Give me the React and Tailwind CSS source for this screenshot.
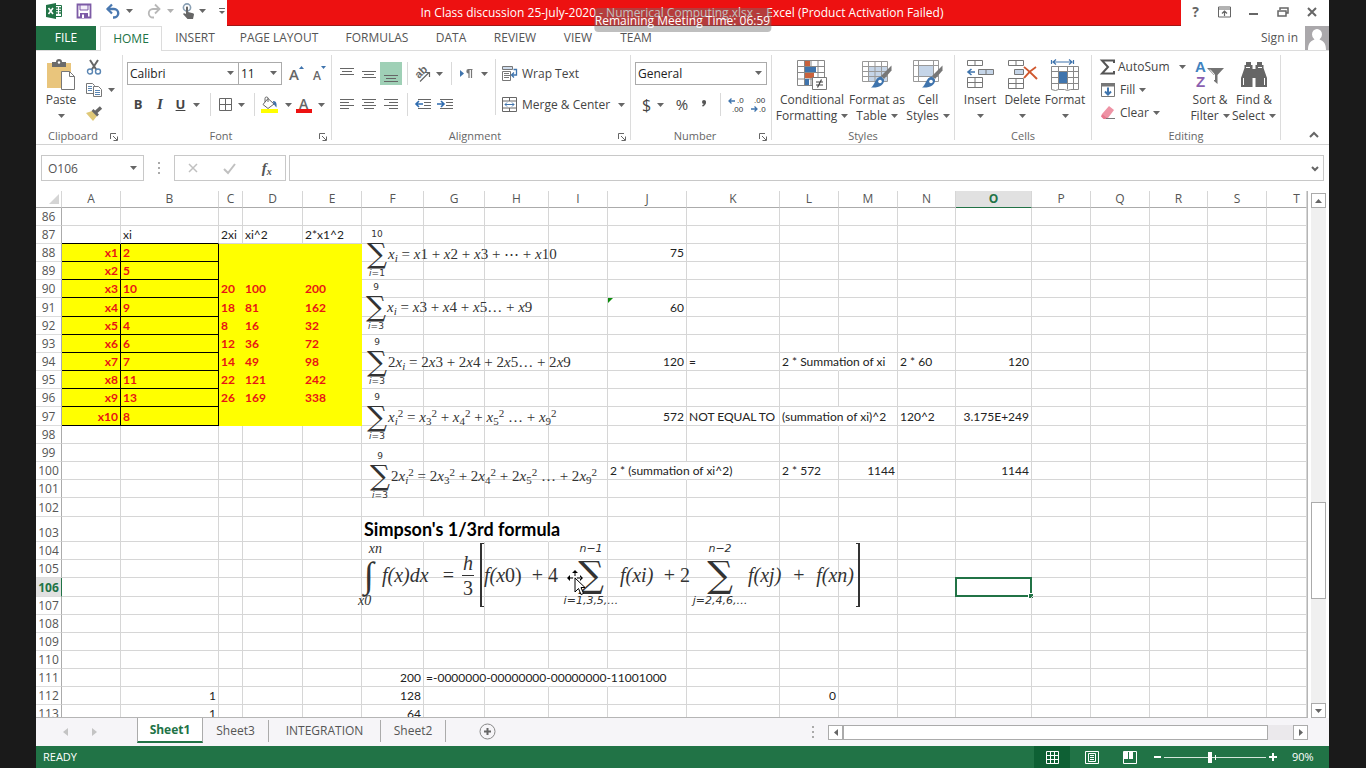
import React from "react";

const Down = ({ className = "" }) => (
  <svg viewBox="0 0 7 4" className={"h-1 w-[7px] shrink-0 fill-[#666] " + className} aria-hidden="true">
    <path d="M0 0h7L3.5 4z" />
  </svg>
);

const Svg = ({ w = 16, h = 16, children }) => (
  <svg width={w} height={h} viewBox={`0 0 ${w} ${h}`} fill="none" className="shrink-0 overflow-visible" aria-hidden="true">
    {children}
  </svg>
);

/* ---------- quick access ---------- */
const ExcelIcon = () => (
  <Svg>
    <path d="M9 2.5h6.5v11H9" fill="#fff" stroke="#217346" />
    <path d="M10 5h2M13 5h2M10 7.5h2M13 7.5h2M10 10h2M13 10h2" stroke="#217346" strokeWidth="1.3" />
    <path d="M0 2l10-2v16L0 14z" fill="#217346" />
    <path d="M2.5 5l4.5 6M7 5l-4.5 6" stroke="#fff" strokeWidth="1.6" />
  </Svg>
);
const SaveIcon = () => (
  <Svg>
    <path d="M1.5 1.5h13v13h-13z" stroke="#7d5ba6" strokeWidth="1.8" />
    <path d="M4 2h8v5H4z" fill="#f4effa" stroke="#7d5ba6" />
    <path d="M4 10h8v5H4z" fill="#7d5ba6" />
    <path d="M6 11.5h2V15H6z" fill="#fff" />
  </Svg>
);
const Undo = ({ color }) => (
  <Svg w={14}>
    <path d="M1.500 6H8a4 4 0 0 1 0 8.500H7" stroke={color} strokeWidth="2.400" />
    <path d="M6 1.500L1.500 6 6 10.500" stroke={color} strokeWidth="2.200" />
  </Svg>
);
const Redo = ({ color }) => (
  <Svg w={14}>
    <path d="M12.500 6H6a4 4 0 0 0 0 8.500h1" stroke={color} strokeWidth="1.800" />
    <path d="M8 1.500L12.500 6 8 10.500" stroke={color} strokeWidth="1.800" />
  </Svg>
);
const Touch = () => (
  <Svg w={13}>
    <circle cx="5" cy="4.500" r="3.600" stroke="#8aa0b4" strokeWidth="1.600" />
    <path d="M4 4.500c0-1.300 2-1.300 2 0V9l5 1.200c.7.200 1 .6 1 1.300L11 16H5.500L1 11c.5-1 1.500-1 3 0z" fill="#666" />
  </Svg>
);

/* ---------- ribbon icons ---------- */
const PasteIcon = () => (
  <Svg w={30} h={32}>
    <path d="M1 4h24v25H1z" fill="#e9c57c" />
    <path d="M6 3h4a3 3 0 0 1 6 0h4v5H6z" fill="#6b6b6b" />
    <circle cx="13" cy="3.5" r="1.2" fill="#fff" />
    <path d="M15.500 12.500h8l5 5v13h-13z" fill="#fff" stroke="#777" />
    <path d="M23.500 12.500v5h5" stroke="#777" />
  </Svg>
);
const CutIcon = () => (
  <Svg>
    <path d="M4 1l6.500 10M12 1L5.500 11" stroke="#666" strokeWidth="2" />
    <circle cx="4" cy="12.500" r="2.500" stroke="#5b86b3" strokeWidth="1.400" />
    <circle cx="12" cy="12.500" r="2.500" stroke="#5b86b3" strokeWidth="1.400" />
  </Svg>
);
const CopyIcon = () => (
  <Svg>
    <path d="M.5 1.500h6l2 2v8h-8z" fill="#fff" stroke="#777" />
    <path d="M2 4.500h4M2 6.500h4M2 8.500h4" stroke="#5b86b3" />
    <path d="M7.500 4.500h5l3 3v7h-8z" fill="#fff" stroke="#777" />
    <path d="M9 8.500h5M9 10.500h5M9 12.500h5" stroke="#5b86b3" />
  </Svg>
);
const BrushIcon = () => (
  <Svg>
    <path d="M0 8l6-2 5 5-4 5z" fill="#dfc878" />
    <path d="M6.500 5l5.500 5.500" stroke="#666" strokeWidth="2.600" />
    <path d="M9.500 7.500L15 2.500" stroke="#666" strokeWidth="3.400" />
  </Svg>
);
const Lines = ({ rows }) => (
  <Svg w={14} h={16}>
    {rows.map(([y, a, b]) => (
      <path key={y} d={`M${a} ${y}.5H${b}`} stroke="#666" />
    ))}
  </Svg>
);
const BordersIcon = () => (
  <Svg w={13} h={13}>
    <path d="M.5.5h12v12H.5zM6.500.5v12M.5 6.500h12" stroke="#666" />
  </Svg>
);
const BucketIcon = () => (
  <Svg w={18} h={16}>
    <path d="M7 1.500l6 5.500-6 4.500-5-4z" fill="#fff" stroke="#666" />
    <path d="M7 5V1.500a1.500 1.500 0 0 0-3 0V5" stroke="#666" />
    <path d="M12 4c3 0 4 2 3.500 6.500C14 9 13.500 8 12.500 7z" fill="#4472a8" />
    <path d="M0 12h17v4H0z" fill="#ff0" />
  </Svg>
);
const OrientIcon = () => (
  <Svg w={17} h={16}>
    <text x="0" y="0" transform="translate(6 13) rotate(-45)" fontSize="11" fontWeight="700" fill="#666" fontFamily="Liberation Sans">ab</text>
    <path d="M7 15.500L16 6.500M12 6.500h4.500V11" stroke="#666" strokeWidth="1.200" />
  </Svg>
);
const ParaIcon = () => (
  <Svg w={13} h={14}>
    <path d="M0 3l4 3.500L0 10z" fill="#3f74ad" />
    <path d="M8.500 2a2.200 2.200 0 0 0 0 4.400h.5V2z" fill="#777" />
    <path d="M12.500 2.500H8.500M9 3v8M11.500 3v8" stroke="#777" strokeWidth="1.200" />
  </Svg>
);
const Indent = ({ right }) => (
  <Svg>
    <path d="M3 2.500h13M9 5.500h7M9 8.500h7M3 11.500h13" stroke="#666" />
    <path d={right ? "M0 7h7M4 4l3 3-3 3" : "M1 7h7M4 4L1 7l3 3"} stroke="#2f6cb0" strokeWidth="1.600" />
  </Svg>
);
const WrapIcon = () => (
  <Svg>
    <path d="M.5.500h10v3H.5z" fill="#cfdcec" stroke="#777" />
    <path d="M.5 5.500h8v9H.5zM2 7.500h5M2 9.500h7M2 11.500h5" stroke="#777" />
    <path d="M11.500 3.500h3V9H10M12 6.500L9.500 9l2.500 2.500" stroke="#3f74ad" strokeWidth="1.300" />
  </Svg>
);
const MergeIcon = () => (
  <Svg>
    <path d="M.5.500h14v14H.5zM.500 4h14M.5 11h14M7.500.5V4M7.500 11v3.500" stroke="#666" />
    <path d="M3 7.500h9M5 5.500l-2 2 2 2M10 5.500l2 2-2 2" stroke="#3f74ad" />
  </Svg>
);
const Decimals = ({ less }) => (
  <Svg w={16} h={16}>
    <g fontFamily="Liberation Sans" fontSize="8" fill="#333">
      <text x={less ? 4 : 9} y="6">{less ? ".00" : ".0"}</text>
      <text x={less ? 9 : 4} y="15">{less ? ".0" : ".00"}</text>
    </g>
    <path d={less ? "M1 12h6M4.500 9.500L7 12l-2.500 2.500" : "M1 4h6M3.500 1.500L1 4l2.500 2.500"} stroke="#3f74ad" strokeWidth="1.300" />
  </Svg>
);
const CondIcon = () => (
  <Svg w={32} h={32}>
    <path d="M1.500 1.500h27v25h-27zM1.500 7.500h27M1.500 13.500h27M1.500 20h27M8.500 1.500v25M15 1.500v25M22 1.500v25" stroke="#888" />
    <path d="M9 2h5v5H9zM9 14h9v5H9z" fill="#c9623c" />
    <path d="M9 8h11v5H9zM9 20h4v6H9z" fill="#3f74ad" />
    <path d="M16.500 18.500h14v12h-14z" fill="#fff" stroke="#777" />
    <path d="M20 23h7M20 26h7M25.500 20.500l-4 8" stroke="#444" strokeWidth="1.200" />
  </Svg>
);
const Brush = () => (
  <>
    <path d="M30.500 6.500v5L23 20l-3-3z" fill="#777" />
    <path d="M20 17.500l3 3c.5 5-4 8.500-13 8 4-2 3.500-10 10-11z" fill="#3f74ad" />
    <circle cx="19" cy="22.500" r="1.800" fill="#fff" />
  </>
);
const FormatTableIcon = () => (
  <Svg w={32} h={32}>
    <path d="M8 8h18v14H8z" fill="#c5d5e8" />
    <path d="M1.500 2.500h25v20h-25zM1.500 7.500h25M1.500 12.500h25M1.500 17.500h25M7.500 2.500v20M14 2.500v20M20.500 2.500v20" stroke="#999" />
    <Brush />
  </Svg>
);
const CellStylesIcon = () => (
  <Svg w={32} h={32}>
    <path d="M7 7h14v10H7z" fill="#c5d5e8" />
    <path d="M1.500 1.500h25v21h-25zM1.500 6.500h25M1.500 17.500h25M6.500 1.500v21M21.500 1.500v21" stroke="#999" />
    <Brush />
  </Svg>
);
const InsertIcon = () => (
  <Svg w={28} h={32}>
    <path d="M1.500 1.500h15v5h-15zM9 1.500v5M1.500 18.500h15v10h-15zM1.500 23.500h15M9 18.500v10" stroke="#777" />
    <path d="M12.500 10.500h15v5h-15z" fill="#c5d5e8" stroke="#777" />
    <path d="M20 10.500v5" stroke="#777" />
    <path d="M2 13h7M5.500 10L2 13l3.500 3" stroke="#3f74ad" strokeWidth="1.600" />
  </Svg>
);
const DeleteIcon = () => (
  <Svg w={32} h={32}>
    <path d="M1.500 1.500h15v5h-15zM9 1.500v5M1.500 19.500h15v10h-15zM1.500 24.500h15M9 19.500v10" stroke="#777" />
    <path d="M7.500 10.500h9v5h-9z" fill="#c5d5e8" stroke="#777" />
    <path d="M17 8c4 3 9 8 13 12M29 8c-5 3-9 7-12 11" stroke="#d0582f" strokeWidth="2" />
  </Svg>
);
const FormatIcon = () => (
  <Svg w={30} h={32}>
    <path d="M1.500 1v4M23.500 1v4M3 3h19M6 .5L3 3l3 2.500M19 .5L22 3l-3 2.500" stroke="#3f74ad" strokeWidth="1.200" />
    <path d="M1.500 7.500h27v23h-8l-3 1-3-1h-6l-3 1-4-1zM1.500 12.500h27M1.500 24.500h27M8.500 7.500v23M17.500 7.500v23M23.500 7.500v23M1.500 18.500h27" stroke="#888" />
    <path d="M9 13h8v11H9z" fill="#3f74ad" />
  </Svg>
);
const SumIcon = () => (
  <Svg>
    <path d="M14 4V1.500H2L8 8l-6 6.500h12V12" stroke="#555" strokeWidth="2" />
  </Svg>
);
const FillIcon = () => (
  <Svg>
    <path d="M1.500 1.500h13v13h-13z" stroke="#777" />
    <path d="M1 1h14v3.500H1z" fill="#777" />
    <path d="M8 5.500v7M5 9.500l3 3 3-3" stroke="#3f74ad" strokeWidth="2" />
  </Svg>
);
const ClearIcon = () => (
  <Svg>
    <path d="M2 9l7-8 5 4-6 8H4z" fill="#ee93a5" />
    <path d="M2 9l5 4-1 1H3.500L1 11.500z" fill="#e8788e" />
    <path d="M6 13.500h9" stroke="#777" />
  </Svg>
);
const SortIcon = () => (
  <Svg w={32} h={32}>
    <g fontFamily="Liberation Sans" fontWeight="700" fontSize="15">
      <text x="1" y="13" fill="#3f83c0">A</text>
      <text x="2" y="28" fill="#8a5fb0">Z</text>
    </g>
    <path d="M13 9h17l-6.500 7v9L20 22v-6z" fill="#737373" />
    <path d="M16 10.500l4.500 5V21" stroke="#fff" />
  </Svg>
);
const FindIcon = () => (
  <Svg w={28} h={32}>
    <path d="M6 3h5v3h1.500v22H1V19L4.500 9V6H6zM17 3h5v3h1.500v3L27 19v9H15.500V6H17z" fill="#666" />
    <path d="M12 10h4v9h-4z" fill="#666" />
    <path d="M3.500 19v7M24.500 19v7M6 8.500h4M18 8.500h4" stroke="#fff" />
  </Svg>
);

/* ---------- ribbon building blocks ---------- */
const IconBtn = ({ label, className = "w-[22px]", gap = "gap-1.5", children }) => (
  <button type="button" aria-label={label} className={"flex h-[23px] shrink-0 items-center justify-center " + gap + " " + className}>
    {children}
  </button>
);

const BigBtn = ({ icon, lines, inline, className }) => (
  <button type="button" className={"flex shrink-0 flex-col items-center pt-1 " + className}>
    {icon}
    <span className="h-px" />
    {lines.map((l, i) => (
      <span key={l} className="flex h-4 items-center gap-1 whitespace-nowrap text-xs">
        {l}
        {inline && i === lines.length - 1 && <Down />}
      </span>
    ))}
    {!inline && <Down className="mt-1.5" />}
  </button>
);

const Group = ({ name, launcher, className, children }) => (
  <section aria-label={name} className={"my-1 flex shrink-0 flex-col border-r border-[#dcdcdc] " + className}>
    <div className="flex h-[72px] shrink-0 items-start">{children}</div>
    <div className="relative flex h-[18px] shrink-0 items-center justify-center text-[11px] text-[#666]">
      <span className={launcher ? "pr-3" : ""}>{name}</span>
      {launcher && (
        <button type="button" aria-label={name + " settings"} className="absolute right-1 top-1.5">
          <Svg w={8} h={8}>
            <path d="M.5 6V.5H6M3 3l4 4M7.500 3.500v4h-4" stroke="#666" />
          </Svg>
        </button>
      )}
    </div>
  </section>
);

const Sep = ({ className = "w-2.5" }) => (
  <div className={"flex h-[23px] shrink-0 justify-center " + className}>
    <div className="w-px bg-[#d9d9d9]" />
  </div>
);

const Select = ({ label, value, className }) => (
  <div className={"relative h-[23px] shrink-0 border border-[#ababab] " + className}>
    <select aria-label={label} defaultValue={value} className="block h-full w-full appearance-none bg-transparent pl-0.5 text-xs text-[#222] outline-none">
      <option>{value}</option>
    </select>
    <Down className="pointer-events-none absolute right-1 top-2" />
  </div>
);

const TABS = [
  ["INSERT", "w-[66px]"],
  ["PAGE LAYOUT", "w-[102px]"],
  ["FORMULAS", "w-[94px]"],
  ["DATA", "w-[54px]"],
  ["REVIEW", "w-[74px]"],
  ["VIEW", "w-[52px]"],
  ["TEAM", "w-16"],
];

function TitleBar() {
  return (
    <header className="flex h-[26px] shrink-0">
      <div className="flex w-[191px] shrink-0 items-center pb-1 pl-2.5">
        <ExcelIcon />
        <button type="button" aria-label="Save" className="ml-3.5"><SaveIcon /></button>
        <button type="button" aria-label="Undo" className="ml-3.5 flex items-center gap-1.5"><Undo color="#4a78b0" /><Down /></button>
        <button type="button" aria-label="Redo" className="ml-3.5 flex items-center gap-1.5"><Redo color="#b8b8b8" /><Down className="opacity-50" /></button>
        <button type="button" aria-label="Touch mode" className="ml-2 flex items-center gap-1"><Touch /><Down /></button>
        <button type="button" aria-label="Customize toolbar" className="ml-3">
          <Svg w={8} h={8}><path d="M1 1.500h6" stroke="#666" /><path d="M1 4h6L4 7z" fill="#666" /></Svg>
        </button>
      </div>
      <h1 className="flex min-w-0 flex-1 items-center justify-center whitespace-pre border-b border-[#a31515] bg-[#ed1111] pr-11 pt-px text-xs text-white">
        {"In Class discussion 25-July-2020 - Numerical Computing.xlsx -  Excel (Product Activation Failed)"}
      </h1>
      <div className="flex w-[148px] shrink-0 items-center pb-0.5">
        <button type="button" aria-label="Help" className="w-[29px] text-sm font-bold text-[#666]">?</button>
        <IconBtn label="Ribbon display options" className="w-[29px]">
          <Svg w={14} h={12}><path d="M.5 1h12v10H.5zM.5 3h12" stroke="#666" /><path d="M6.500 10V5M4 7.500L6.500 5 9 7.500" stroke="#666" strokeWidth="1.200" /></Svg>
        </IconBtn>
        <IconBtn label="Minimize" className="w-[29px]">
          <Svg w={10} h={10}><path d="M0 7h9" stroke="#666" strokeWidth="2" /></Svg>
        </IconBtn>
        <IconBtn label="Restore" className="w-[29px]">
          <Svg w={12} h={10}><path d="M3 3V1h8v5H9" stroke="#666" strokeWidth="1.500" /><path d="M1 4h8v5H1z" stroke="#666" strokeWidth="1.500" /></Svg>
        </IconBtn>
        <IconBtn label="Close" className="w-[29px]">
          <Svg w={10} h={10}><path d="M1 1l8 8M9 1L1 9" stroke="#666" strokeWidth="2" /></Svg>
        </IconBtn>
      </div>
    </header>
  );
}

function TabBar() {
  return (
    <nav className="flex h-[25px] shrink-0 items-stretch border-b border-[#dcdcdc] text-xs text-[#555]">
      <button type="button" className="w-[60px] shrink-0 bg-[#217346] text-white">FILE</button>
      <button type="button" className="-mb-px ml-1 w-[62px] shrink-0 border border-b-0 border-[#dcdcdc] bg-white text-[#217346]">HOME</button>
      {TABS.map(([t, w]) => (
        <button type="button" key={t} className={"shrink-0 whitespace-nowrap " + w}>{t}</button>
      ))}
      <button type="button" className="ml-auto pr-[7px] text-xs">Sign in</button>
      <svg viewBox="0 0 24 24" className="h-6 w-6 shrink-0" role="img" aria-label="Account">
        <path d="M0 0h24v24H0z" fill="#aaa8ab" />
        <path d="M7 8.500a5 5.500 0 0 1 10 0 5 6 0 0 1-2.500 5C19 15 21 18 21 24H3c0-6 2-9 6.500-10.500a5 6 0 0 1-2.500-5z" fill="#fff" />
      </svg>
    </nav>
  );
}

function Ribbon() {
  return (
    <div className="flex h-[94px] shrink-0 border-b border-[#d2d2d2] text-[#444]">
      <Group name="Clipboard" launcher className="w-[87px]">
        <BigBtn icon={<PasteIcon />} lines={["Paste"]} className="w-[50px]" />
        <div className="flex flex-col">
          <IconBtn label="Cut" className="w-4"><CutIcon /></IconBtn>
          <IconBtn label="Copy" className="w-7"><CopyIcon /><Down /></IconBtn>
          <IconBtn label="Format painter" className="w-4"><BrushIcon /></IconBtn>
        </div>
      </Group>

      <Group name="Font" launcher className="w-[209px]">
        <div className="flex flex-col gap-2 pl-1 pt-[7px]">
          <div className="flex">
            <Select label="Font" value="Calibri" className="w-28" />
            <Select label="Font size" value="11" className="-ml-px w-11" />
            <IconBtn label="Increase font size" className="ml-1 w-[22px]">
              <Svg w={16} h={16}><text x="0" y="14" fontSize="15" fontWeight="600" fill="#666" fontFamily="Open Sans">A</text><path d="M10 3l2.500-3L15 3z" fill="#3f74ad" /></Svg>
            </IconBtn>
            <IconBtn label="Decrease font size">
              <Svg w={16} h={16}><text x="2" y="14" fontSize="12" fontWeight="600" fill="#666" fontFamily="Open Sans">A</text><path d="M10 0l2.500 3L15 0z" fill="#3f74ad" /></Svg>
            </IconBtn>
          </div>
          <div className="flex">
            <IconBtn label="Bold"><span className="text-[13px] font-bold">B</span></IconBtn>
            <IconBtn label="Italic"><span className="font-['Liberation_Serif',serif] text-[15px] font-bold italic">I</span></IconBtn>
            <IconBtn label="Underline" className="w-[34px]" gap="gap-2"><span className="text-[13px] font-bold underline">U</span><Down /></IconBtn>
            <Sep />
            <IconBtn label="Borders" className="w-[34px]"><BordersIcon /><Down /></IconBtn>
            <Sep />
            <IconBtn label="Fill color" className="w-[34px]"><BucketIcon /><Down /></IconBtn>
            <IconBtn label="Font color" className="w-[34px]">
              <Svg w={16} h={16}><text x="3" y="12" fontSize="14" fontWeight="600" fill="#666" fontFamily="Open Sans">A</text><path d="M0 12h16v4H0z" fill="#ed1111" /></Svg>
              <Down />
            </IconBtn>
          </div>
        </div>
      </Group>

      <Group name="Alignment" launcher className="w-[299px]">
        <div className="flex flex-col gap-2 pl-1 pt-[7px]">
          <div className="flex">
            <IconBtn label="Top align"><Lines rows={[[2, 0, 14], [5, 2, 12], [8, 0, 14]]} /></IconBtn>
            <IconBtn label="Middle align"><Lines rows={[[5, 0, 14], [8, 2, 12], [11, 0, 14]]} /></IconBtn>
            <IconBtn label="Bottom align" className="w-[22px] bg-[#9fd0b6]"><Lines rows={[[9, 0, 14], [12, 2, 12], [15, 0, 14]]} /></IconBtn>
            <Sep />
            <IconBtn label="Orientation" className="w-8"><OrientIcon /><Down /></IconBtn>
            <Sep className="w-3.5" />
            <IconBtn label="Text direction" className="w-8" gap="gap-2"><ParaIcon /><Down /></IconBtn>
          </div>
          <div className="flex">
            <IconBtn label="Align left"><Lines rows={[[2, 0, 14], [5, 0, 9], [8, 0, 14], [11, 0, 9]]} /></IconBtn>
            <IconBtn label="Center"><Lines rows={[[2, 0, 14], [5, 2, 12], [8, 0, 14], [11, 2, 12]]} /></IconBtn>
            <IconBtn label="Align right"><Lines rows={[[2, 0, 14], [5, 5, 14], [8, 0, 14], [11, 5, 14]]} /></IconBtn>
            <Sep />
            <IconBtn label="Decrease indent"><Indent /></IconBtn>
            <IconBtn label="Increase indent"><Indent right /></IconBtn>
          </div>
        </div>
        <div className="flex h-[60px] w-2.5 justify-center pt-1"><div className="w-px bg-[#d9d9d9]" /></div>
        <div className="flex flex-col items-start gap-2 pl-0.5 pt-[7px]">
          <button type="button" className="flex h-[23px] items-center gap-1 whitespace-nowrap text-xs"><WrapIcon />Wrap Text</button>
          <button type="button" className="flex h-[23px] items-center gap-1 whitespace-nowrap text-xs"><MergeIcon />Merge &amp; Center<Down className="ml-1" /></button>
        </div>
      </Group>

      <Group name="Number" launcher className="w-[141px]">
        <div className="flex flex-col gap-2 pl-1 pt-[7px]">
          <Select label="Number format" value="General" className="w-[132px]" />
          <div className="flex">
            <IconBtn label="Accounting format" className="w-9"><span className="text-base">$</span><Down /></IconBtn>
            <IconBtn label="Percent style"><span className="text-[15px]">%</span></IconBtn>
            <IconBtn label="Comma style">
              <Svg w={6} h={16}><circle cx="3" cy="5" r="2" fill="#555" /><path d="M4 4.500c.5 2-.5 3.500-2.500 4.500" stroke="#555" strokeWidth="1.600" /></Svg>
            </IconBtn>
            <Sep />
            <IconBtn label="Increase decimal"><Decimals /></IconBtn>
            <IconBtn label="Decrease decimal"><Decimals less /></IconBtn>
          </div>
        </div>
      </Group>

      <Group name="Styles" className="w-[183px]">
        <BigBtn inline icon={<CondIcon />} lines={["Conditional", "Formatting"]} className="ml-1 w-[72px]" />
        <BigBtn inline icon={<FormatTableIcon />} lines={["Format as", "Table"]} className="w-[58px]" />
        <BigBtn inline icon={<CellStylesIcon />} lines={["Cell", "Styles"]} className="w-11" />
      </Group>

      <Group name="Cells" className="w-[137px]">
        <BigBtn icon={<InsertIcon />} lines={["Insert"]} className="ml-1 w-[42px]" />
        <BigBtn icon={<DeleteIcon />} lines={["Delete"]} className="w-[43px]" />
        <BigBtn icon={<FormatIcon />} lines={["Format"]} className="w-[42px]" />
      </Group>

      <Group name="Editing" className="w-[189px]">
        <div className="flex w-24 shrink-0 flex-col items-start pl-2 pr-0.5">
          <button type="button" className="flex h-[23px] w-full items-center gap-0.5 text-xs"><SumIcon />AutoSum<Down className="ml-auto" /></button>
          <button type="button" className="flex h-[23px] items-center gap-1 text-xs"><FillIcon />Fill<Down /></button>
          <button type="button" className="flex h-[23px] items-center gap-1 text-xs"><ClearIcon />Clear<Down /></button>
        </div>
        <BigBtn inline icon={<SortIcon />} lines={["Sort &", "Filter"]} className="w-11" />
        <BigBtn inline icon={<FindIcon />} lines={["Find &", "Select"]} className="w-11" />
      </Group>

      <button type="button" aria-label="Collapse ribbon" className="ml-auto self-end px-2.5 pb-1.5">
        <Svg w={10} h={7}><path d="M1 6l4-4 4 4" stroke="#666" strokeWidth="2" /></Svg>
      </button>
    </div>
  );
}

function FormulaBar() {
  return (
    <div className="flex h-[46px] shrink-0 items-center px-[5px] text-[#555]">
      <div className="relative h-[26px] w-[103px] shrink-0 border border-[#c8c8c8]">
        <input aria-label="Name box" defaultValue="O106" className="block h-full w-full bg-transparent pl-1.5 text-xs outline-none" />
        <Down className="pointer-events-none absolute right-1.5 top-2.5" />
      </div>
      <div className="flex w-[30px] shrink-0 justify-center">
        <Svg w={2} h={12}><path d="M0 0h2v2H0zM0 5h2v2H0zM0 10h2v2H0z" fill="#aaa" /></Svg>
      </div>
      <div className="flex h-[26px] w-28 shrink-0 items-center justify-around border border-[#c8c8c8]">
        <IconBtn label="Cancel"><Svg w={10} h={10}><path d="M1 1l8 8M9 1L1 9" stroke="#c0c0c0" strokeWidth="1.500" /></Svg></IconBtn>
        <IconBtn label="Enter"><Svg w={13} h={11}><path d="M1 6l4 4 7-9" stroke="#c0c0c0" strokeWidth="2" /></Svg></IconBtn>
        <IconBtn label="Insert function"><span className="font-['Liberation_Serif',serif] text-[15px] font-bold italic">f<sub className="text-[10px]">x</sub></span></IconBtn>
      </div>
      <div className="relative ml-[3px] h-[26px] min-w-0 flex-1 border border-[#c8c8c8]">
        <input aria-label="Formula" className="block h-full w-full bg-transparent px-1.5 text-xs outline-none" />
        <svg viewBox="0 0 8 6" className="pointer-events-none absolute right-1 top-2.5 h-1.5 w-2" fill="none"><path d="M1 1l3 3 3-3" stroke="#666" strokeWidth="2" /></svg>
      </div>
    </div>
  );
}

/* ---------- sheet ---------- */
const COLS = [
  ["A", 59], ["B", 98], ["C", 24], ["D", 60], ["E", 59], ["F", 62], ["G", 61], ["H", 64], ["I", 59], ["J", 79],
  ["K", 93], ["L", 59], ["M", 59], ["N", 58], ["O", 76], ["P", 59], ["Q", 59], ["R", 58], ["S", 59], ["T", null],
];

const TALL = { 91: "h-[19px]", 97: "h-[19px]", 102: "h-[19px]", 103: "h-[25px]", 106: "h-[19px]" };

const CELLS = {
  B87: "xi", C87: "2xi", D87: "xi^2", E87: "2*x1^2",
  A88: "x1", A89: "x2", A90: "x3", A91: "x4", A92: "x5", A93: "x6", A94: "x7", A95: "x8", A96: "x9", A97: "x10",
  B88: "2", B89: "5", B90: "10", B91: "9", B92: "4", B93: "6", B94: "7", B95: "11", B96: "13", B97: "8",
  C90: "20", C91: "18", C92: "8", C93: "12", C94: "14", C95: "22", C96: "26",
  D90: "100", D91: "81", D92: "16", D93: "36", D94: "49", D95: "121", D96: "169",
  E90: "200", E91: "162", E92: "32", E93: "72", E94: "98", E95: "242", E96: "338",
  J88: "75", J91: "60", J94: "120", K94: "=", L94: "2 * Summation of xi", N94: "2 * 60", O94: "120",
  J97: "572", K97: "NOT EQUAL TO", L97: "(summation of xi)^2", N97: "120^2", O97: "3.175E+249",
  J100: "2 * (summation of xi^2)", L100: "2 * 572", M100: "1144", O100: "1144",
  F103: "Simpson's 1/3rd formula",
  F111: "200", G111: "=-0000000-00000000-00000000-11001000",
  B112: "1", F112: "128", L112: "0", B113: "1", F113: "64",
};

const RIGHT = new Set(["J88", "J91", "J94", "O94", "J97", "O97", "M100", "O100", "F111", "B112", "F112", "L112", "B113", "F113"]);
const SPILL = new Set(["L94", "L97", "J100", "G111", "H111", "I111", "F103", "G103", "H103"]);
const ROWS = Array.from({ length: 28 }, (_, i) => 86 + i);

function Cell({ col, row }) {
  const id = col + row;
  const table = row >= 88 && row <= 97;
  let style = "border-b border-r border-[#d6d6d6] text-[#222]";
  if (table && (col === "A" || col === "B")) style = "border-b border-r border-black bg-[#ff0] font-bold text-[#e81414]";
  else if (table && "CDE".includes(col)) style = "border-b border-r border-[#ff0] bg-[#ff0] font-bold text-[#e81414]";
  else if (row === 87 && (col === "A" || col === "B")) style = "border-b border-b-black border-r border-r-[#d6d6d6] text-[#222]";
  else if (SPILL.has(id)) style = "border-b border-b-[#d6d6d6] border-r border-r-transparent text-[#222]";
  const align = RIGHT.has(id) || (table && col === "A") ? "justify-end" : "justify-start";
  const size = id === "F103" ? "h-6 text-lg leading-5 font-bold text-black" : "h-4";
  return (
    <td className={"relative p-0 align-bottom " + style}>
      {CELLS[id] && <div className={`flex items-center whitespace-nowrap px-0.5 ${align} ${size}`}>{CELLS[id]}</div>}
      {id === "J91" && <svg viewBox="0 0 5 5" className="absolute left-0 top-0 h-[5px] w-[5px]"><path d="M0 0h5L0 5z" fill="#0b8a0b" /></svg>}
      {id === "O106" && (
        <div className="absolute -inset-px border-2 border-[#217346]">
          <span className="absolute -bottom-1 -right-1 h-1.5 w-1.5 border border-white bg-[#217346]" />
        </div>
      )}
    </td>
  );
}

const Sum = ({ top, bottom }) => (
  <span className="flex w-[22px] shrink-0 flex-col items-center whitespace-nowrap font-['DejaVu_Sans',sans-serif] text-[9px] leading-[11px] text-[#333]">
    <span>{top}</span>
    <span className="flex h-7 items-center font-['DejaVu_Serif',serif] text-[28px] leading-7">∑</span>
    <span><i>i</i>={bottom}</span>
  </span>
);

const V = ({ n, sup }) => (
  <>
    <i>x</i>
    <sub className="text-[11px]">{n}</sub>
    {sup && <sup className="text-[11px]">2</sup>}
  </>
);

const Formula = ({ top, bottom, className, children }) => (
  <div className={"absolute flex items-center whitespace-nowrap font-['Liberation_Serif',serif] text-[15px] leading-5 text-[#333] " + className}>
    <Sum top={top} bottom={bottom} />
    <span>{children}</span>
  </div>
);

const BigSum = ({ top, bottom, className }) => (
  <span className={"flex shrink-0 flex-col items-center whitespace-nowrap font-['DejaVu_Sans',sans-serif] text-[11px] leading-3 " + className}>
    <span>{top}</span>
    <span className="flex h-10 items-center font-['DejaVu_Serif',serif] text-4xl leading-10 not-italic">∑</span>
    <span>{bottom}</span>
  </span>
);

function Sheet() {
  return (
    <main className="flex min-h-0 flex-1">
      <div className="relative min-w-0 flex-1 overflow-hidden border-b border-r border-[#b5b5b5]">
        <table className="w-full table-fixed border-separate border-spacing-0 font-[Lato,sans-serif] text-xs leading-4">
          <colgroup>
            <col style={{ width: 26 }} />
            {COLS.map(([c, w]) => <col key={c} style={w ? { width: w } : undefined} />)}
          </colgroup>
          <thead className="font-['Open_Sans',sans-serif] text-[#555]">
            <tr className="h-[17px]">
              <th aria-label="Select all" className="border-b border-r border-b-[#ababab] border-r-[#d6d6d6] p-0">
                <svg viewBox="0 0 10 10" className="ml-auto mr-0.5 h-2.5 w-2.5"><path d="M10 0v10H0z" fill="#d5d5d5" /></svg>
              </th>
              {COLS.map(([c]) => (
                <th key={c} scope="col" className={"border-b border-r border-r-[#d6d6d6] p-0 " + (c === "O" ? "border-b-[#217346] bg-[#e1e1e1] font-bold text-[#217346]" : "border-b-[#ababab] font-normal") + (c === "T" ? " pl-5" : "")}>{c}</th>
              ))}
            </tr>
          </thead>
          <tbody>
            {ROWS.map((r) => (
              <tr key={r} className={TALL[r] || "h-[18px]"}>
                <th scope="row" className={"border-b border-r border-b-[#dcdcdc] p-0 align-bottom font-['Open_Sans',sans-serif] " + (r === 106 ? "border-r-[#217346] bg-[#e1e1e1] font-bold text-[#217346]" : "border-r-[#ababab] font-normal text-[#555]")}>{r}</th>
                {COLS.map(([c]) => <Cell key={c} col={c} row={r} />)}
              </tr>
            ))}
          </tbody>
        </table>

        <Formula top="10" bottom="1" className="left-[330px] top-[38px]"><V n={<i>i</i>} /> = <i>x</i>1 + <i>x</i>2 + <i>x</i>3 + ⋯ + <i>x</i>10</Formula>
        <Formula top="9" bottom="3" className="left-[329px] top-[91px]"><V n={<i>i</i>} /> = <i>x</i>3 + <i>x</i>4 + <i>x</i>5… + <i>x</i>9</Formula>
        <Formula top="9" bottom="3" className="left-[330px] top-[146px]">2<V n={<i>i</i>} /> = 2<i>x</i>3 + 2<i>x</i>4 + 2<i>x</i>5… + 2<i>x</i>9</Formula>
        <Formula top="9" bottom="3" className="left-[330px] top-[201px]"><V n={<i>i</i>} sup /> = <V n="3" sup /> + <V n="4" sup /> + <V n="5" sup /> … + <V n="9" sup /></Formula>
        <Formula top="9" bottom="3" className="left-[333px] top-[260px]">2<V n={<i>i</i>} sup /> = 2<V n="3" sup /> + 2<V n="4" sup /> + 2<V n="5" sup /> … + 2<V n="9" sup /></Formula>

        <div className="absolute left-80 top-[352px] flex h-16 items-center whitespace-nowrap font-['Liberation_Serif',serif] text-xl italic text-[#333]">
          <span className="flex w-[26px] shrink-0 flex-col text-sm leading-3">
            <span className="self-end">xn</span>
            <span className="flex h-10 items-center self-center text-4xl leading-10">∫</span>
            <span className="pl-0.5">x0</span>
          </span>
          <span className="flex w-20 shrink-0 justify-between pr-2"><span>f(x)dx</span><span className="not-italic">=</span></span>
          <span className="flex w-3 shrink-0 flex-col items-center leading-6">
            <span className="w-full border-b border-[#333] text-center">h</span>
            <span className="not-italic">3</span>
          </span>
          <span className="ml-1.5 h-16 w-1 shrink-0 border-y border-l-2 border-[#333]" />
          <span className="flex w-[78px] shrink-0 justify-between pr-1"><span>f(x<span className="not-italic">0)</span></span><span className="not-italic">+ 4</span></span>
          <BigSum top="n−1" bottom="i=1,3,5,…" className="w-[58px]" />
          <span className="flex w-[74px] shrink-0 justify-between pr-1"><span>f(xi)</span><span className="not-italic">+ 2</span></span>
          <BigSum top="n−2" bottom="j=2,4,6,…" className="w-[52px]" />
          <span className="flex w-[110px] shrink-0 justify-between px-0.5"><span>f(xj)</span><span className="not-italic">+</span><span>f(xn)</span></span>
          <span className="h-16 w-1 shrink-0 border-y border-r-2 border-[#333]" />
        </div>

        <svg viewBox="0 0 20 26" className="absolute left-[531px] top-[379px] h-[26px] w-5" aria-hidden="true">
          <path d="M8 0l3 3H5zM0 8l3-3v6zM16 8l-3-3v6zM7.500 3h1v3h-1zM2 7.500h4v1H2zM10 7.500h4v1h-4z" fill="#000" />
          <path d="M8 8v14l3.500-3.500 2.500 6 2.500-1-2.500-6h4z" fill="#fff" stroke="#000" />
        </svg>
      </div>

      <div className="flex w-[21px] shrink-0 flex-col pl-[3px] pr-[3px] pt-0.5" aria-hidden="true">
        <div className="flex h-[15px] shrink-0 items-center justify-center border border-[#ababab]"><Down className="rotate-180" /></div>
        <div className="flex-[295] bg-[#f0f0f0]" />
        <div className="flex-[96] border border-[#ababab] bg-white" />
        <div className="flex-[104] bg-[#f0f0f0]" />
        <div className="flex h-[15px] shrink-0 items-center justify-center border border-[#ababab]"><Down /></div>
      </div>
    </main>
  );
}

function SheetTabs() {
  return (
    <div className="flex h-7 shrink-0 items-start bg-[#f6f5f8] text-xs text-[#555]">
      <div className="flex h-full w-[101px] shrink-0 items-center gap-6 pl-[27px]">
        <Svg w={5} h={8}><path d="M5 0v8L0 4z" fill="#c4c4c4" /></Svg>
        <Svg w={5} h={8}><path d="M0 0v8l5-4z" fill="#c4c4c4" /></Svg>
      </div>
      <button type="button" className="h-[25px] w-[66px] shrink-0 border-x border-b-2 border-x-[#ababab] border-b-[#217346] bg-white font-bold text-[#217346]">Sheet1</button>
      <button type="button" className="my-0.5 h-[22px] w-[66px] shrink-0 border-r border-[#ababab]">Sheet3</button>
      <button type="button" className="my-0.5 h-[22px] w-28 shrink-0 border-r border-[#ababab]">INTEGRATION</button>
      <button type="button" className="my-0.5 h-[22px] w-[65px] shrink-0 border-r border-[#ababab]">Sheet2</button>
      <button type="button" aria-label="New sheet" className="flex h-[26px] w-[83px] shrink-0 items-center justify-center">
        <Svg w={17} h={17}><circle cx="8.500" cy="8.500" r="7.500" stroke="#888" /><path d="M8.500 5v7M5 8.500h7" stroke="#666" strokeWidth="2" /></Svg>
      </button>
      <div className="ml-auto flex h-full w-[517px] shrink-0 items-center pr-[21px]" aria-hidden="true">
        <Svg w={2} h={12}><path d="M0 0h2v2H0zM0 5h2v2H0zM0 10h2v2H0z" fill="#aaa" /></Svg>
        <div className="ml-[14px] flex h-[15px] w-[15px] shrink-0 items-center justify-center border border-[#ababab] bg-white"><Svg w={4} h={7}><path d="M4 0v7L0 3.500z" fill="#666" /></Svg></div>
        <div className="h-[15px] flex-1 border border-[#ababab] bg-white" />
        <div className="h-[15px] w-[25px] shrink-0 bg-[#ebe9ec]" />
        <div className="flex h-[15px] w-[15px] shrink-0 items-center justify-center border border-[#ababab] bg-white"><Svg w={4} h={7}><path d="M0 0v7l4-3.500z" fill="#666" /></Svg></div>
      </div>
    </div>
  );
}

function StatusBar() {
  return (
    <footer className="flex h-[22px] shrink-0 items-center bg-[#217346] text-[11px] text-white">
      <span className="pl-[7px]">READY</span>
      <div className="ml-auto flex h-full items-center">
        <IconBtn label="Normal view" className="h-full w-9 bg-[#0e6034]"><Svg w={13} h={13}><path d="M.5.5h12v12H.5zM4.500.5v12M8.500.5v12M.5 4.500h12M.5 8.500h12" stroke="#fff" /></Svg></IconBtn>
        <IconBtn label="Page layout view" className="w-[44px]"><Svg w={14} h={13}><path d="M.5.5h13v12H.5z" stroke="#fff" /><path d="M3.500 2.500h7v8h-7zM5 4.500h4M5 6.500h4M5 8.500h4" stroke="#fff" /></Svg></IconBtn>
        <IconBtn label="Page break view" className="w-8"><Svg w={14} h={13}><path d="M.5.5h13v12H.5z" stroke="#fff" /><path d="M1 1h4v7H1zM6 1h4v7H6z" fill="#fff" /></Svg></IconBtn>
        <button type="button" aria-label="Zoom out" className="ml-2 w-2.5"><Svg w={7} h={8}><path d="M0 4h7" stroke="#fff" strokeWidth="2" /></Svg></button>
        <div className="relative flex h-full w-[102px] items-center">
          <div className="h-px w-full bg-[#d5e6dc]" />
          <div className="absolute left-[44px] h-[11px] w-1 bg-white" />
          <div className="absolute left-[51px] h-[5px] w-px bg-white" />
          <input type="range" aria-label="Zoom" min="10" max="400" defaultValue="90" className="absolute inset-0 m-0 h-full w-full opacity-0" />
        </div>
        <button type="button" aria-label="Zoom in" className="ml-[3px]"><Svg w={8} h={8}><path d="M0 4h8M4 0v8" stroke="#fff" strokeWidth="2" /></Svg></button>
        <span className="w-[52px] pl-[15px]">90%</span>
      </div>
    </footer>
  );
}

export default function App() {
  return (
    <div className="h-screen bg-[#1a1a1a] pl-9 pr-[37px] font-['Open_Sans',sans-serif]">
      <div className="relative flex h-full flex-col overflow-hidden bg-white">
        <TitleBar />
        <TabBar />
        <Ribbon />
        <FormulaBar />
        <Sheet />
        <SheetTabs />
        <StatusBar />
        <div className="absolute left-1/2 top-2 flex h-6 -translate-x-1/2 items-center whitespace-nowrap rounded bg-[#707070]/45 px-px pt-0.5 text-xs text-white">
          Remaining Meeting Time: 06:59
        </div>
      </div>
    </div>
  );
}
